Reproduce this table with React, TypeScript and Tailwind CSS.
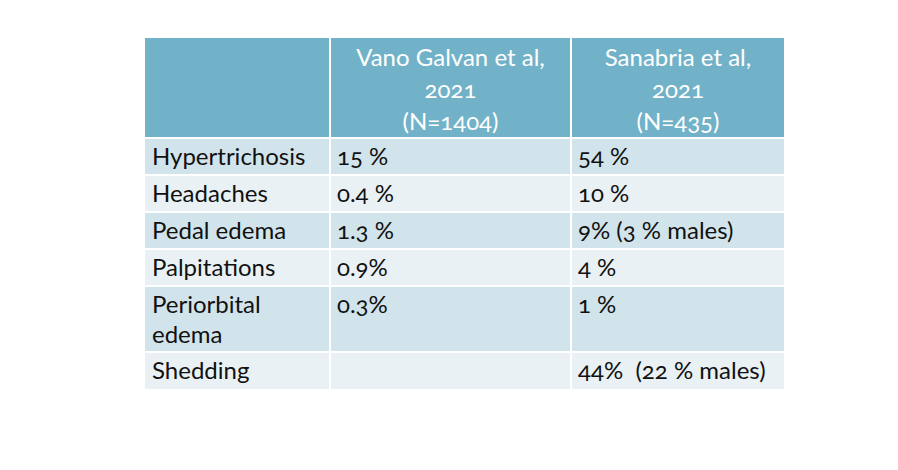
import React from "react";

const rows: { label: string[]; a: string; b: string; dark: boolean }[] = [
  { label: ["Hypertrichosis"], a: "15 %", b: "54 %", dark: true },
  { label: ["Headaches"], a: "0.4 %", b: "10 %", dark: false },
  { label: ["Pedal edema"], a: "1.3 %", b: "9% (3 % males)", dark: true },
  { label: ["Palpitations"], a: "0.9%", b: "4 %", dark: false },
  { label: ["Periorbital", "edema"], a: "0.3%", b: "1 %", dark: true },
  { label: ["Shedding"], a: "", b: "44%  (22 % males)", dark: false },
];

export default function App() {
  return (
    <div
      className="w-[898px] h-[470px] bg-white pt-[38px] pl-[145px] text-[#111]"
      style={{ fontFamily: "Lato, 'Open Sans', sans-serif", fontVariantNumeric: "oldstyle-nums" }}
    >
      <table className="border-collapse text-[24px] leading-[30px]">
        <colgroup>
          <col className="w-[185px]" />
          <col className="w-[241px]" />
          <col className="w-[213px]" />
        </colgroup>
        <thead>
          <tr className="bg-[#72b2c8] text-white h-[98px]">
            <th className="border-r-2 border-white" />
            <th className="border-r-2 border-white font-normal text-center align-top pt-[3px] leading-[32px]">
              Vano Galvan et al,
              <br />
              2021
              <br />
              (N=1404)
            </th>
            <th className="font-normal text-center align-top pt-[3px] leading-[32px]">
              Sanabria et al,
              <br />
              2021
              <br />
              (N=435)
            </th>
          </tr>
        </thead>
        <tbody>
          {rows.map((r, i) => (
            <tr
              key={i}
              className={`${r.dark ? "bg-[#d1e4eb]" : "bg-[#e9f1f4]"} border-t-2 border-white`}
            >
              <td className={`border-r-2 border-white align-top pl-[7px] pt-[2px] ${r.label.length > 1 ? "h-[66px]" : "h-[37px]"}`}>
                {r.label.map((l, j) => (
                  <div key={j}>{l}</div>
                ))}
              </td>
              <td className="border-r-2 border-white align-top pl-[6px] pt-[2px] whitespace-pre">{r.a}</td>
              <td className="align-top pl-[6px] pt-[2px] whitespace-pre">{r.b}</td>
            </tr>
          ))}
        </tbody>
      </table>
    </div>
  );
}
